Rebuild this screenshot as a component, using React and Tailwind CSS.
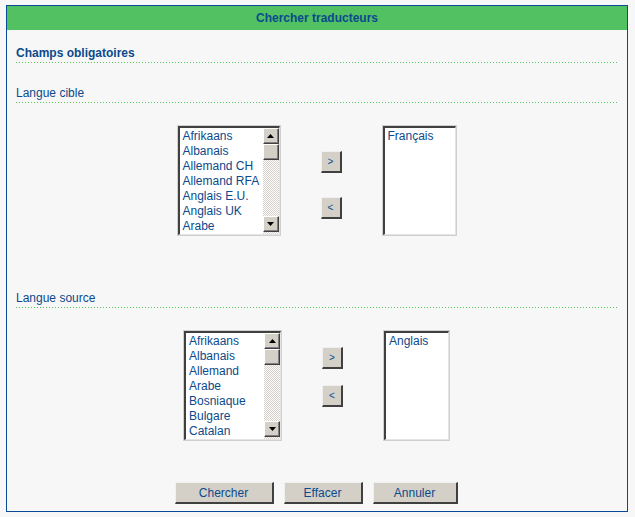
import React from "react";

const blue = "text-[#0b4a8c]";

function ArrowBtn({ down }) {
  return (
    <div className="w-4 h-4 bg-[#d4d0c8] border-t border-l border-t-[#ffffff] border-l-[#ffffff] border-b border-r border-b-[#404040] border-r-[#404040] flex items-center justify-center shadow-[inset_-1px_-1px_0_#808080]">
      <svg width="7" height="4" viewBox="0 0 7 4">
        {down ? <polygon points="0,0 7,0 3.5,4" fill="#000" /> : <polygon points="3.5,0 7,4 0,4" fill="#000" />}
      </svg>
    </div>
  );
}

function ListBox({ items, w, scroll }) {
  return (
    <div className={`${w} h-[111px] border border-[#d0d0d0] shrink-0`}>
      <div className="w-full h-full border-t-2 border-l-2 border-t-[#404040] border-l-[#404040] border-b border-r border-b-[#e4e4e4] border-r-[#e4e4e4] bg-white flex">
        <div className={`flex-1 pl-[3px] pt-[1px] overflow-hidden text-[12px] leading-[15px] ${blue}`}>
          {items.map((t) => (
            <div key={t} className="whitespace-nowrap">{t}</div>
          ))}
        </div>
        {scroll && (
          <div className="w-4 h-full flex flex-col pb-[2px] bg-[image:repeating-conic-gradient(#d4d0c8_0_25%,#ffffff_0_50%)] bg-[length:2px_2px]">
            <ArrowBtn />
            <div className="w-4 h-4 bg-[#d4d0c8] border-t border-l border-t-[#ffffff] border-l-[#ffffff] border-b border-r border-b-[#404040] border-r-[#404040] shadow-[inset_-1px_-1px_0_#808080]" />
            <div className="flex-1" />
            <ArrowBtn down />
          </div>
        )}
      </div>
    </div>
  );
}

function SmallBtn({ children, className = "" }) {
  return (
    <div className={`w-[21px] h-[22px] bg-[#d4d0c8] border-t border-l border-t-[#f0f0f0] border-l-[#f0f0f0] border-b-2 border-r-2 border-b-[#404040] border-r-[#404040] flex items-center justify-center text-[10px] leading-none ${blue} ${className}`}>
      {children}
    </div>
  );
}

function Btn({ children, w }) {
  return (
    <div className={`${w} h-[22px] bg-[#d4d0c8] border-t border-l border-t-[#f0f0f0] border-l-[#f0f0f0] border-b-2 border-r-2 border-b-[#404040] border-r-[#404040] flex items-center justify-center text-[12px] ${blue}`}>
      {children}
    </div>
  );
}

function Dotted() {
  return <div className="h-px mr-[9px] bg-[image:linear-gradient(to_right,#55c855_1px,transparent_1px)] bg-[length:3px_1px]" />;
}

export default function App() {
  return (
    <div className="w-[635px] h-[517px] bg-[#f7f7f7] pt-[5px] pl-[6px] font-['Liberation_Sans',Arial,sans-serif]">
      <div className="w-[622px] h-[507px] border border-[#0b4a96] bg-[#f7f7f7] flex flex-col">
        <div className={`h-6 bg-[#52c162] flex items-center justify-center text-[12px] font-bold ${blue}`}>
          Chercher traducteurs
        </div>
        <div className="pl-[9px]">
          <div className={`mt-[14px] text-[12px] leading-4 font-bold pt-[1px] pb-[1px] ${blue}`}>Champs obligatoires</div>
          <Dotted />
          <div className={`mt-[21px] text-[12px] leading-4 pt-[1px] pb-[1px] ${blue}`}>Langue cible</div>
          <Dotted />
        </div>

        <div className="mt-[22px] flex justify-center gap-10 mr-[1px]">
          <ListBox
            w="w-[104px]"
            scroll
            items={["Afrikaans", "Albanais", "Allemand CH", "Allemand RFA", "Anglais E.U.", "Anglais UK", "Arabe"]}
          />
          <div className="flex flex-col">
            <SmallBtn className="mt-[26px]">&gt;</SmallBtn>
            <SmallBtn className="mt-[24px]">&lt;</SmallBtn>
          </div>
          <ListBox w="w-[75px]" items={["Français"]} />
        </div>

        <div className="pl-[9px]">
          <div className={`mt-[53px] text-[12px] leading-4 pt-[1px] pb-[1px] ${blue}`}>Langue source</div>
          <Dotted />
        </div>

        <div className="mt-[22px] flex justify-center gap-10 mr-[1px]">
          <ListBox
            w="w-[99px]"
            scroll
            items={["Afrikaans", "Albanais", "Allemand", "Arabe", "Bosniaque", "Bulgare", "Catalan"]}
          />
          <div className="flex flex-col">
            <SmallBtn className="mt-[17px]">&gt;</SmallBtn>
            <SmallBtn className="mt-[16px]">&lt;</SmallBtn>
          </div>
          <ListBox w="w-[67px]" items={["Anglais"]} />
        </div>

        <div className="mt-[41px] flex justify-center gap-[10px] mr-[2px]">
          <Btn w="w-[99px]">Chercher</Btn>
          <Btn w="w-[79px]">Effacer</Btn>
          <Btn w="w-[85px]">Annuler</Btn>
        </div>
      </div>
    </div>
  );
}
